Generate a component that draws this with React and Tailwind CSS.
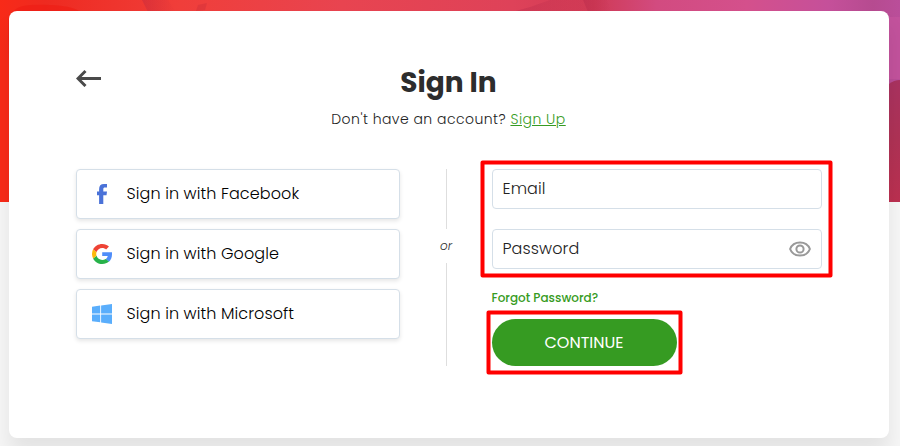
import { useState } from "react";

function FacebookIcon() {
  return (
    <svg className="h-5 w-5" viewBox="0 0 20 20" fill="#4a72d8">
      <path d="M7.1 20V11.2H5V7.6h2.1V5.2C7.1 2 8.6.1 12 .1h3v3.5h-1.900c-1.500 0-1.800.6-1.800 1.800v2.200H15l-.5 3.600h-3.200V20z" />
    </svg>
  );
}

function GoogleIcon() {
  return (
    <svg className="h-5 w-5" viewBox="0 0 48 48">
      <path fill="#4f8df9" d="M48 19.7H24.5v8.9h13.2c-.6 3.3-2.3 6-5 7.8l8.1 6.2C45.5 38.2 48 31.7 48 24.5z" />
      <path fill="#27b24a" d="M24.5 48c6.6 0 12.2-2.2 16.3-5.9l-8.1-6.2c-2.2 1.5-4.9 2.3-8.2 2.3-6.3 0-11.7-4.2-13.6-9.9l-8.3 6.4C6.6 42.6 14.9 48 24.5 48z" />
      <path fill="#fbb90a" d="M10.9 28.3a14.4 14.4 0 0 1 0-9.1l-8.3-6.5A24 24 0 0 0 0 23.8c0 3.9.9 7.6 2.6 10.9z" />
      <path fill="#ee4335" d="M24.5 9.3c3.6 0 6.8 1.2 9.3 3.6l6.9-6.9C36.6 2.2 31.1 0 24.5 0 14.9 0 6.6 5.2 2.6 12.7l8.3 6.5c1.9-5.7 7.3-9.9 13.6-9.9z" />
    </svg>
  );
}

function MicrosoftIcon() {
  return (
    <svg className="h-5 w-5" viewBox="0 0 20 20" fill="#5aaefc">
      <path d="M0 2.8 8.2 1.6V9.4H0zM9.1 1.5 20 0v9.4H9.1zM0 10.6h8.2v7.7L0 17.2zM9.1 10.6H20V20L9.1 18.5z" />
    </svg>
  );
}

function EyeIcon() {
  return (
    <svg className="h-4 w-[22px]" viewBox="0 0 22 16" fill="none" stroke="#999" strokeWidth="2">
      <path d="M1.1 8C2.8 3.7 6.5 1.5 11 1.5S19.2 3.7 20.9 8c-1.7 4.3-5.4 6.5-9.9 6.500S2.800 12.300 1.100 8z" />
      <circle cx="11" cy="8" r="3.6" />
    </svg>
  );
}

// Photo-like banner behind the card
function Banner() {
  return (
    <svg className="col-start-1 row-start-1 h-[202px] w-[900px]" viewBox="0 0 900 202" preserveAspectRatio="none">
      <defs>
        <linearGradient id="banner" x1="0" x2="1" y1="0" y2="0">
          <stop offset="0" stopColor="#f82a18" />
          <stop offset="0.05" stopColor="#ee2a20" />
          <stop offset="0.2" stopColor="#f03e3a" />
          <stop offset="0.38" stopColor="#e84450" />
          <stop offset="0.57" stopColor="#de4259" />
          <stop offset="0.66" stopColor="#d03a55" />
          <stop offset="0.73" stopColor="#d24b80" />
          <stop offset="0.83" stopColor="#d4508c" />
          <stop offset="0.92" stopColor="#c5509a" />
          <stop offset="0.97" stopColor="#b64b90" />
          <stop offset="1" stopColor="#ba4e9a" />
        </linearGradient>
        <linearGradient id="right" x1="0" x2="0" y1="0" y2="1">
          <stop offset="0" stopColor="#a93260" />
          <stop offset="0.5" stopColor="#af3255" />
          <stop offset="1" stopColor="#bb3050" />
        </linearGradient>
        <linearGradient id="fold" x1="0" x2="1" y1="0" y2="0">
          <stop offset="0" stopColor="#a92045" stopOpacity="0.3" />
          <stop offset="1" stopColor="#a92045" stopOpacity="0" />
        </linearGradient>
      </defs>
      <path fill="url(#banner)" d="M0 0h900v202H0z" />
      <path fill="#ee1d14" opacity="0.6" d="M8 59V20Q12 6 30 5q40-2 53 8H10z" />
      <path fill="url(#fold)" d="M142 0h26l8 12h-28z" />
      <path fill="#a92035" opacity="0.2" d="m198 5 9-2-2 7-9 1z" />
      <path fill="url(#fold)" d="M512 12q20-5 38-12h33l3 12z" />
      <path fill="url(#fold)" d="M583 0h24l5 12h-24z" />
      <path fill="#f82a18" d="M0 60h9v142H0z" />
      <path fill="#c2529c" d="M889 17h11v62h-11z" />
      <path fill="url(#right)" d="M889 84q5-4 11-4v122h-11z" />
    </svg>
  );
}

const providers = [
  { name: "Facebook", icon: FacebookIcon },
  { name: "Google", icon: GoogleIcon },
  { name: "Microsoft", icon: MicrosoftIcon },
];

export default function App() {
  const [email, setEmail] = useState("");
  const [password, setPassword] = useState("");
  const [visible, setVisible] = useState(false);

  return (
    <div className="grid h-[446px] w-[900px] grid-cols-1 grid-rows-1 overflow-hidden bg-[#f6f6f6] font-[Poppins,Inter,sans-serif]">
      <Banner />
      <main className="relative col-start-1 row-start-1 mt-[11px] ml-[9px] h-[427px] w-[880px] rounded-lg bg-white px-[67px] shadow-[0_15px_20px_rgba(0,0,0,0.08)]">
        <header className="flex h-[158px] items-start pt-[51px]">
          <button type="button" aria-label="Back" className="mt-[7px] w-[26px]">
            <svg className="h-[18px] w-[26px]" viewBox="0 0 26 18" fill="none" stroke="#4a4a4a" strokeWidth="3">
              <path d="M2 9.5h23M9.5 2 2 9.5 9.5 17" />
            </svg>
          </button>
          <div className="flex-1 pr-[27px] text-center">
            <h1 className="mt-px text-[28px] leading-10 font-bold text-[#2d2d2d]">Sign In</h1>
            <p className="mt-1.5 text-sm leading-5 font-light tracking-[0.46px] text-[#222]">
              Don't have an account?{" "}
              <a href="#signup" className="text-[#369b22] underline underline-offset-1">Sign Up</a>
            </p>
          </div>
        </header>

        <div className="flex items-start">
          <div className="flex w-[324px] flex-col gap-2.5">
            {providers.map((item) => (
              <button
                key={item.name}
                type="button"
                className="flex h-[50px] items-center gap-[14.6px] rounded border border-[#d5dfe8] bg-white pl-[15px] text-base font-light tracking-[0.09px] text-black shadow-[0_2px_4px_rgba(0,0,0,0.1)]"
              >
                <item.icon />
                <span>Sign in with {item.name}</span>
              </button>
            ))}
          </div>

          <div className="flex h-[197px] w-[93px] flex-col items-center">
            <div className="h-[60px] w-px bg-[#dedede]" />
            <span className="flex h-[34px] items-center pr-px text-xs font-light text-[#333] italic">or</span>
            <div className="w-px flex-1 bg-[#dedede]" />
          </div>

          <form className="-ml-px flex w-[330px] flex-col items-start" onSubmit={(e) => e.preventDefault()}>
            <input
              type="email"
              placeholder="Email"
              value={email}
              onChange={(e) => setEmail(e.target.value)}
              className="h-10 w-full rounded border border-[#d5dfe8] px-[9.5px] pb-0.5 text-base font-light tracking-[0.09px] text-[#222] placeholder:text-[#222]"
            />
            <div className="mt-5 flex h-10 w-full items-center rounded border border-[#d5dfe8] pr-2.5 pl-[9.5px]">
              <input
                type={visible ? "text" : "password"}
                placeholder="Password"
                value={password}
                onChange={(e) => setPassword(e.target.value)}
                className="min-w-0 flex-1 text-base font-light tracking-[0.09px] text-[#222] placeholder:text-[#222]"
              />
              <button type="button" aria-label="Show password" onClick={() => setVisible(!visible)}>
                <EyeIcon />
              </button>
            </div>
            <a href="#forgot" className="-ml-[0.5px] mt-5 text-xs leading-[18px] font-medium text-[#369b22]">Forgot Password?</a>
            <button type="submit" className="mt-3 h-[47px] w-[185px] rounded-full bg-[#369b22] pr-px text-base text-white">
              CONTINUE
            </button>
          </form>
        </div>

        {/* Highlight frames */}
        <svg className="pointer-events-none absolute inset-0 h-full w-full" viewBox="9 11 880 427" fill="none" stroke="#ff0000" strokeWidth="4" strokeLinejoin="round">
          <rect x="482.5" y="162.5" width="348" height="113" />
          <rect x="488.5" y="312.5" width="192" height="60" />
        </svg>
      </main>
    </div>
  );
}
